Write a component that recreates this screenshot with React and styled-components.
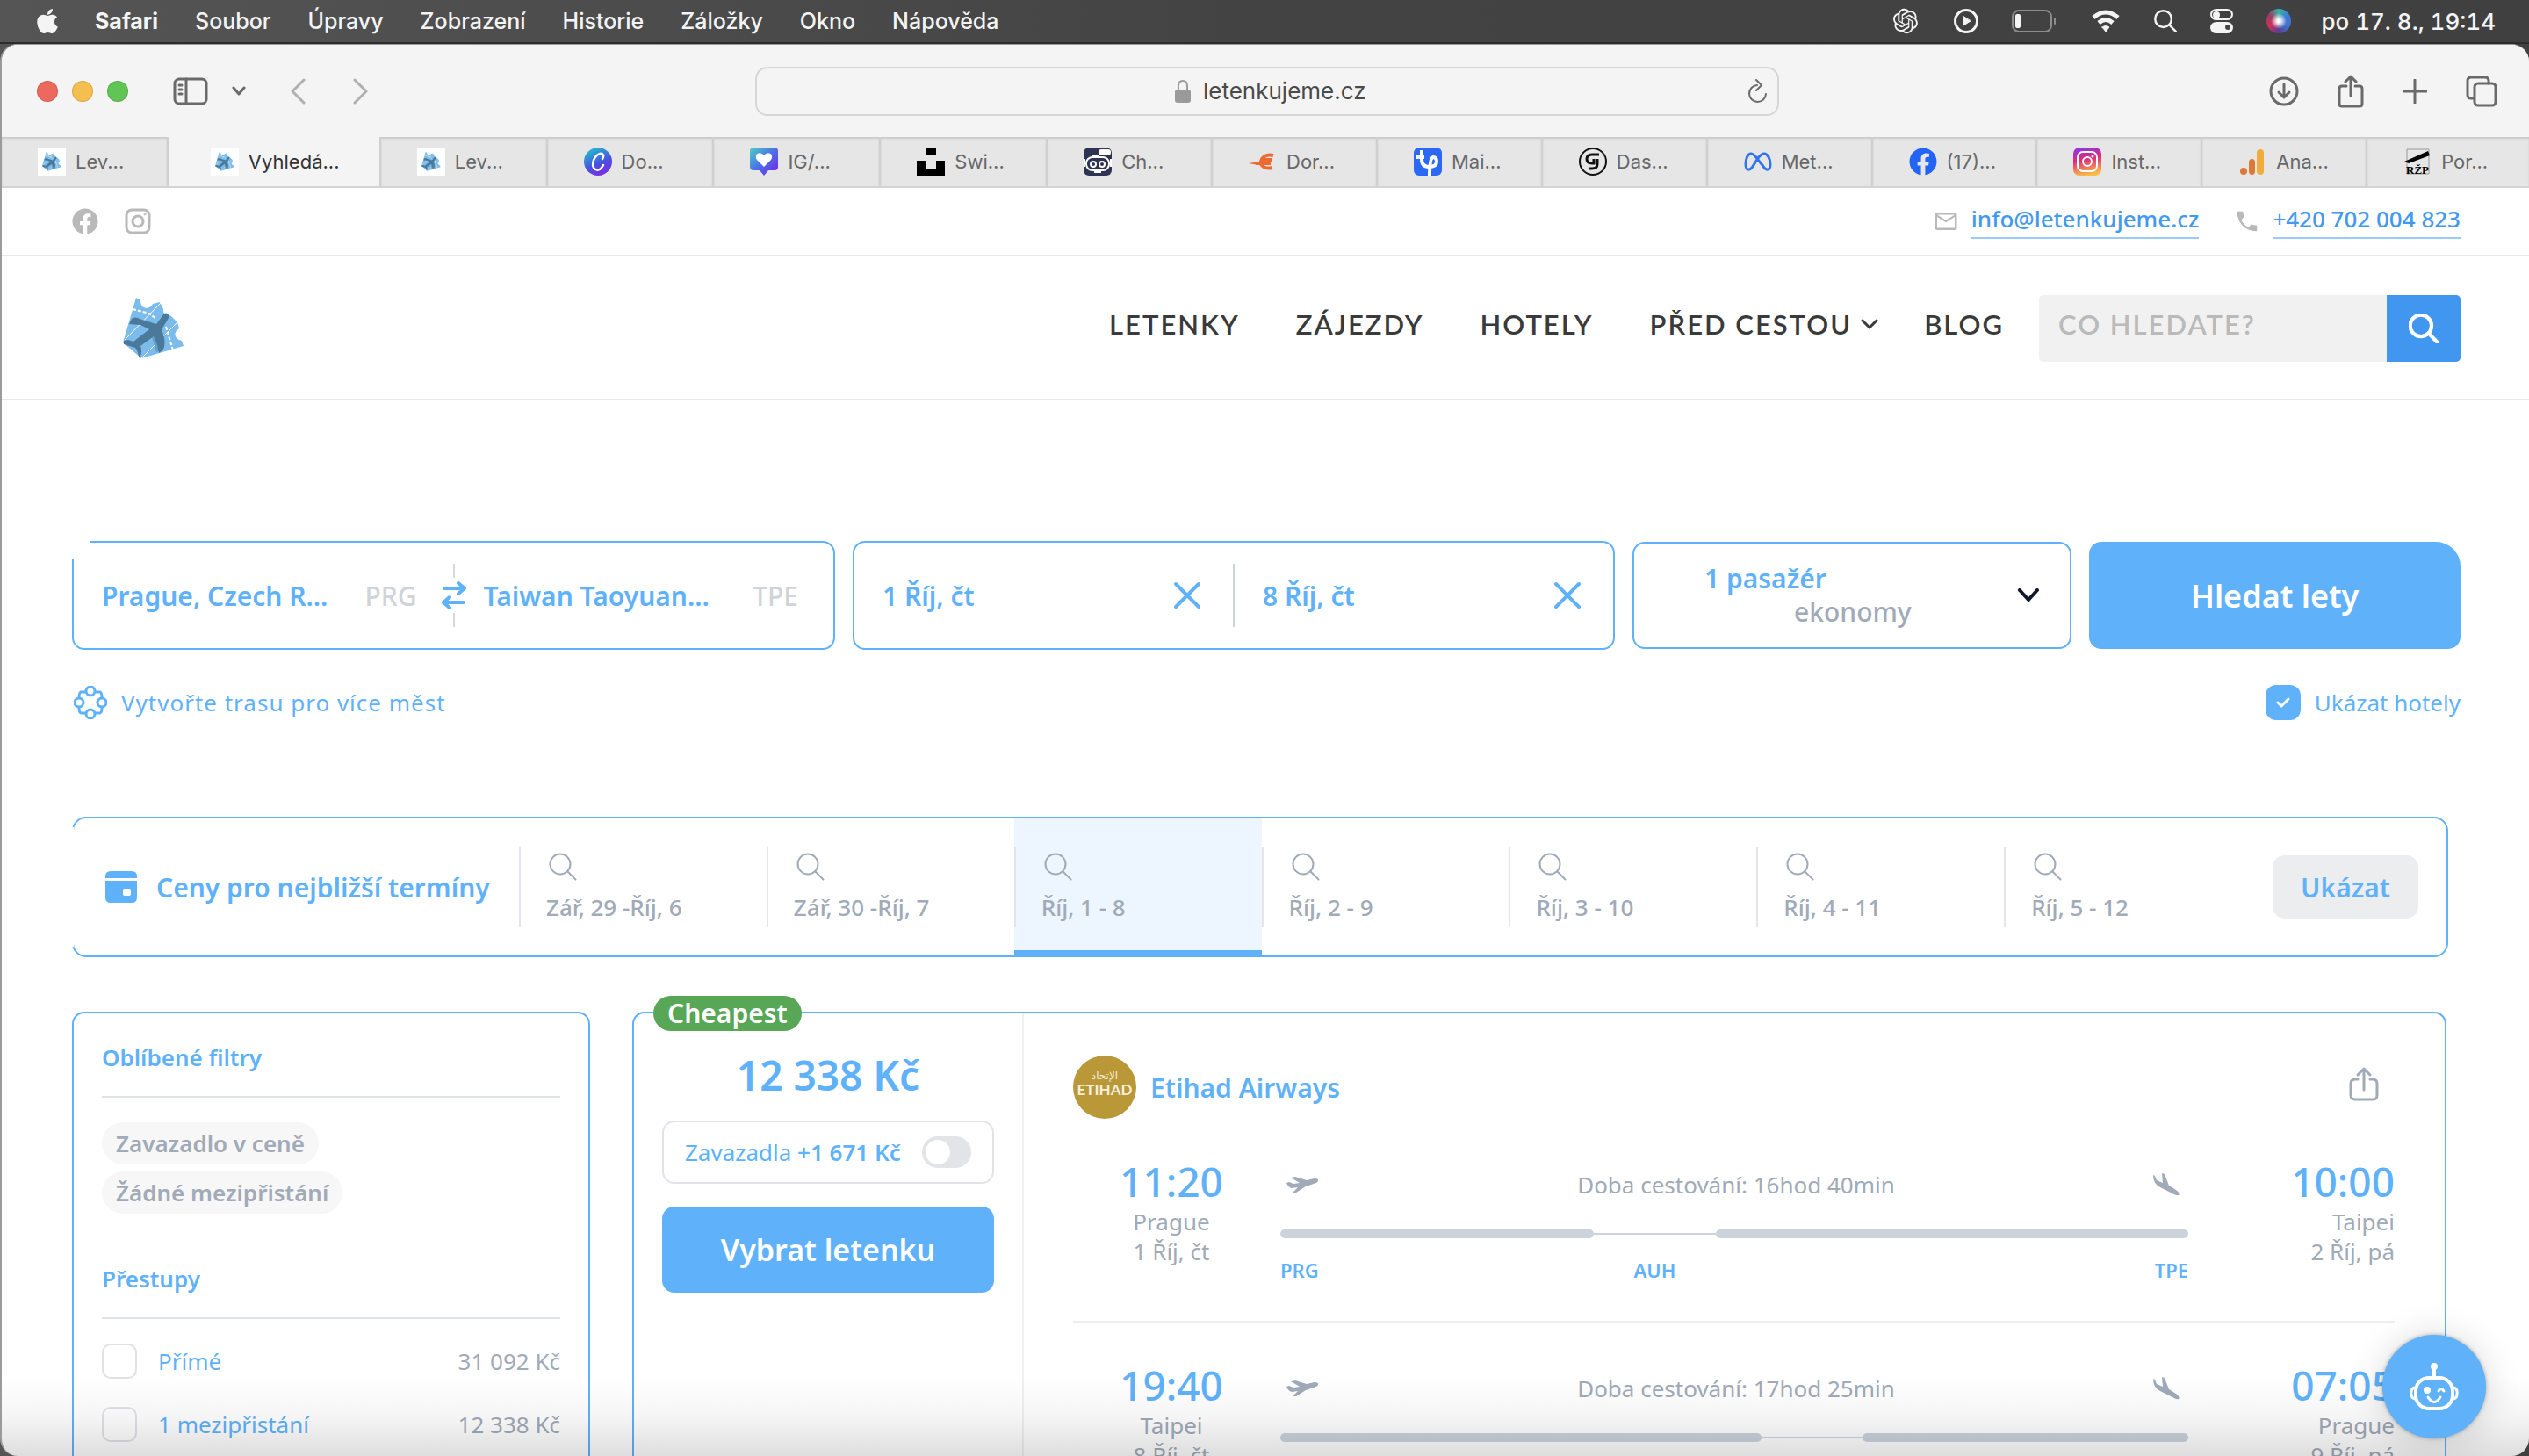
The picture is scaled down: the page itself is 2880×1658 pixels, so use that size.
import React from 'react';
import styled, {createGlobalStyle} from 'styled-components';
import {FaApple, FaFacebook} from 'react-icons/fa';
import {RiOpenaiFill} from 'react-icons/ri';
import {MdMailOutline, MdPhone} from 'react-icons/md';

const GlobalStyle = createGlobalStyle`
    * {
        box-sizing: border-box;
        margin: 0;
    }

    body {
        background: #333333;
        overflow: hidden;
        font-family: "Noto Sans", sans-serif;
    }

    button, input {
        font: inherit;
        color: inherit;
        border: 0;
        padding: 0;
        background: none;
        outline: none;
    }

    a {
        color: inherit;
        text-decoration: none;
    }

    svg {
        display: block;
        flex: none;
    }

    input[type="checkbox"] {
        appearance: none;
    }
`;

const menus = ['Soubor', 'Úpravy', 'Zobrazení', 'Historie', 'Záložky', 'Okno', 'Nápověda'];

const dates = [
    'Zář, 29 -Říj, 6',
    'Zář, 30 -Říj, 7',
    'Říj, 1 - 8',
    'Říj, 2 - 9',
    'Říj, 3 - 10',
    'Říj, 4 - 11',
    'Říj, 5 - 12',
];

const legs = [
    {
        from: {time: '11:20', city: 'Prague', date: '1 Říj, čt'},
        to: {time: '10:00', city: 'Taipei', date: '2 Říj, pá'},
        duration: '16hod 40min',
        parts: [357, 139, 538],
        codes: ['PRG', 'AUH', 'TPE'],
    },
    {
        from: {time: '19:40', city: 'Taipei', date: '8 Říj, čt'},
        to: {time: '07:05', city: 'Prague', date: '9 Říj, pá'},
        duration: '17hod 25min',
        parts: [548, 115, 371],
        codes: ['TPE', 'AUH', 'PRG'],
    },
];

const Line = ({w = 24, h = w, box = `0 0 ${w} ${h}`, sw = 2, children}) => (
    <svg width={w} height={h} viewBox={box} fill="none" stroke="currentColor" strokeWidth={sw}
         strokeLinecap="round" strokeLinejoin="round" aria-hidden="true">
        {children}
    </svg>
);

const TicketLogo = ({size}) => (
    <svg width={size} height={size} viewBox="0 0 70 70" aria-hidden="true">
        <path fill="#7bbcec" d="M15 0 20 3C20 14 31 14 34 7L42 5 46 13Q45 18 50 19T57 23L62 28 64 35C57 39 58 47 67 49L69 55 21 69 0 51Z"/>
        <path fill="none" stroke="#fff" d="M43 6 2 48M62 28 21 69"/>
        <path fill="none" stroke="#fff" strokeWidth="2" strokeDasharray="4 2" d="M11 13 30 18 38 24M49 33 57 60"/>
        <path fill="#619fc8" d="M33 45 38 43 43 60 38 62Z"/>
        <path fill="#4b7999" d="M47 18C51 16 54 20 51 25L44 36C48 46 49 55 45 60L41 63C40 57 39 51 35 44L20 55C22 60 21 65 19 69 17 64 17 60 14 57L1 53V49L6 48 12 50 30 36 20 31 7 30 10 24Q14 21 19 24L38 30Z"/>
    </svg>
);

const SearchIcon = ({size = 32, sw = 2}) => (
    <Line w={size} box="0 0 32 32" sw={sw}><circle cx="13" cy="13" r="11.500"/><path d="m21.500 21.500 9 9"/></Line>
);

const Cross = () => <Line w={32} sw={4}><path d="m3 3 26 26M29 3 3 29"/></Line>;

const TakeOff = () => (
    <svg width="38" height="20" viewBox="0 0 38 20" fill="#a0aab8" aria-hidden="true">
        <path d="M1 8 4 7 9 9 16 8 6 2 11 1 24 5 33 3Q38 3 37 6 36 8 32 9L23 12 12 19 8 19 14 13 7 14Q3 13 1 8Z"/>
    </svg>
);

const Landing = () => (
    <svg width="30" height="26" viewBox="0 0 30 26" fill="#a0aab8" aria-hidden="true">
        <path d="M0 2 2 3 4 8 11 11 10 0 13 1 18 14 26 19Q31 23 29 25 27 26 22 23L8 16Q0 12 0 2Z"/>
    </svg>
);

const Robot = () => (
    <Line w={56} h={56} sw={4}>
        <path d="M28 18V7"/>
        <circle cx="28" cy="5" r="3" fill="currentColor" strokeWidth="2"/>
        <rect x="7" y="18" width="42" height="35" rx="15"/>
        <path d="M6 29Q1 30 2 37 2 41 6 42M50 29Q55 30 54 37 54 41 50 42" strokeWidth="3"/>
        <circle cx="20" cy="32" r="2" fill="currentColor"/>
        <path d="M33 33Q36 28 39 33M21 40Q28 51 35 40" strokeWidth="3"/>
    </Line>
);

const favicons = {
    ticket: <svg width="32" height="32" viewBox="0 0 32 32"><path fill="#fff" d="M0 0h32v32H0z"/><g transform="translate(5 5)"><TicketLogo size={22}/></g></svg>,
    canva: (
        <svg width="32" height="32" viewBox="0 0 32 32">
            <defs><linearGradient id="cv" x1=".2" y1="0" x2=".7" y2="1"><stop stopColor="#20c4cb"/><stop offset=".6" stopColor="#4a50df"/><stop offset="1" stopColor="#7d2ae7"/></linearGradient></defs>
            <circle cx="16" cy="16" r="16" fill="url(#cv)"/>
            <path d="M21 13C24 8 20 5 16 8 10 12 8 22 13 25 17 27 20 24 22 20" fill="none" stroke="#fff" strokeWidth="2.500" strokeLinecap="round"/>
        </svg>
    ),
    heart: (
        <svg width="32" height="32" viewBox="0 0 32 32">
            <defs><linearGradient id="ht" x1="0" y1="0" x2="1" y2="1"><stop stopColor="#4bd1c4"/><stop offset=".5" stopColor="#4c6ee8"/><stop offset="1" stopColor="#7a1fe0"/></linearGradient></defs>
            <path fill="url(#ht)" d="M4 0h24q4 0 4 4v18q0 4-4 4h-7l-5 6-5-6H4q-4 0-4-4V4q0-4 4-4Z"/>
            <path fill="#fff" d="M16 22 8 14C4 8 11 3 16 9 21 3 28 8 24 14Z"/>
        </svg>
    ),
    blocks: <svg width="32" height="32" viewBox="0 0 32 32"><path d="M10 0h12v9H10zM0 15h10v9h12v-9h10v17H0z"/></svg>,
    bot: (
        <svg width="32" height="32" viewBox="0 0 32 32">
            <rect width="32" height="32" rx="6" fill="#2f3352"/>
            <rect x="17" y="2" width="14" height="7" rx="3" fill="#fff"/>
            <rect x="3" y="11" width="26" height="15" rx="7" fill="none" stroke="#fff" strokeWidth="2"/>
            <path d="M1 13v9M31 13v9M12 28h8M10 9h8" stroke="#fff" strokeWidth="2"/>
            <circle cx="11" cy="19" r="3" fill="none" stroke="#fff" strokeWidth="2"/>
            <circle cx="21" cy="19" r="3" fill="none" stroke="#fff" strokeWidth="2"/>
        </svg>
    ),
    euro: <svg width="32" height="32" viewBox="0 0 32 32"><path d="M28 9C20 7 15 11 14 16s5 9 13 7M8 18h17M15 14h11" fill="none" stroke="#ec6b35" strokeWidth="4"/><path d="M0 18 11 16v4Z" fill="#ec6b35"/></svg>,
    mail: (
        <svg width="32" height="32" viewBox="0 0 32 32">
            <rect width="32" height="32" rx="6" fill="#2b68f6"/>
            <path d="M3 11h9M9 3v10q0 9 8 9 9 0 9-6 0-5-4-5-4 1-4 21" fill="none" stroke="#fff" strokeWidth="4"/>
        </svg>
    ),
    dash: (
        <svg width="32" height="32" viewBox="0 0 32 32" fill="none" stroke="#111">
            <circle cx="16" cy="16" r="15" strokeWidth="2"/>
            <path d="M23 8h-8q-6 0-6 5t6 5h2v-5M21 13v6q0 5-6 5h-4" strokeWidth="3"/>
        </svg>
    ),
    meta: <svg width="32" height="32" viewBox="0 0 32 32"><path d="M16 14C12 8 10 7 8 7 4 7 2 13 2 19c0 8 5 8 9 1l5-8c3-4 5-5 7-5 4 0 7 6 7 12 0 8-5 8-9 1Z" fill="none" stroke="#2f74ea" strokeWidth="3"/></svg>,
    facebook: <FaFacebook size={32} color="#2464f5"/>,
    instagram: (
        <svg width="32" height="32" viewBox="0 0 32 32">
            <defs><linearGradient id="ig" x1=".2" y1="0" x2=".4" y2="1"><stop stopColor="#8b35e8"/><stop offset=".45" stopColor="#e02c78"/><stop offset="1" stopColor="#fcbc45"/></linearGradient></defs>
            <rect width="32" height="32" rx="7" fill="url(#ig)"/>
            <g fill="none" stroke="#fff" strokeWidth="2"><rect x="5" y="5" width="22" height="22" rx="6"/><circle cx="16" cy="16" r="5"/></g>
            <circle cx="22" cy="10" r="1.500" fill="#fff"/>
        </svg>
    ),
    analytics: <svg width="32" height="32" viewBox="0 0 32 32"><rect x="21" y="2" width="8" height="29" rx="4" fill="#f0ad3c"/><rect x="12" y="13" width="7" height="18" rx="4" fill="#dc7a35"/><circle cx="6" cy="27" r="4" fill="#dc7a35"/></svg>,
    rzp: (
        <svg width="32" height="32" viewBox="0 0 32 32">
            <path fill="none" stroke="#999" d="M4 2h25v28H4z"/>
            <path d="M1 16 28 4l2 5-24 9Z"/>
            <text x="16" y="30" fontSize="13" fontWeight="700" textAnchor="middle" fontFamily="Liberation Serif">RŽP</text>
        </svg>
    ),
};

const tabs = [
    ['ticket', 'Lev...'],
    ['ticket', 'Vyhledá...'],
    ['ticket', 'Lev...'],
    ['canva', 'Do...'],
    ['heart', 'IG/...'],
    ['blocks', 'Swi...'],
    ['bot', 'Ch...'],
    ['euro', 'Dor...'],
    ['mail', 'Mai...'],
    ['dash', 'Das...'],
    ['meta', 'Met...'],
    ['facebook', '(17)...'],
    ['instagram', 'Inst...'],
    ['analytics', 'Ana...'],
    ['rzp', 'Por...'],
];

const SystemBar = () => (
    <MenuBar>
        <MenuGroup $gap={42}>
            <FaApple size={32}/>
            <AppName>Safari</AppName>
            {menus.map((name) => <MenuItem key={name}>{name}</MenuItem>)}
        </MenuGroup>
        <MenuGroup $gap={38}>
            <RiOpenaiFill size={34}/>
            <Line w={28} box="0 0 28 28" sw={3}><circle cx="14" cy="14" r="12.500"/><path d="M11 9v10l8-5Z" fill="currentColor" strokeWidth="1"/></Line>
            <Line w={52} h={26}>
                <rect x="1" y="1" width="44" height="24" rx="7" stroke="#8d8d8d"/>
                <rect x="4" y="5" width="6" height="16" rx="2" fill="currentColor" stroke="none"/>
                <path d="M49 10v6" stroke="#8d8d8d"/>
            </Line>
            <Line w={34} h={26} sw={5}>
                <path d="M3 9Q17-3 31 9M9 15Q17 8 25 15" strokeLinecap="butt"/>
                <path d="m13 20 4 5 4-5q-4-3-8 0Z" fill="currentColor" strokeWidth="1"/>
            </Line>
            <SearchIcon size={26} sw={3}/>
            <Line w={26} h={28}>
                <rect x="1" y="1" width="24" height="11" rx="6"/><circle cx="7" cy="7" r="3" fill="currentColor"/>
                <rect x="1" y="16" width="24" height="11" rx="6" fill="currentColor"/><circle cx="20" cy="21" r="3" fill="#444" stroke="none"/>
            </Line>
            <Siri/>
            <Clock>po 17. 8., 19:14</Clock>
        </MenuGroup>
    </MenuBar>
);

const BrowserBar = () => (
    <>
        <Toolbar>
            <ToolSide>
                <Lights><Light $color="#ec695e"/><Light $color="#f4bf4e"/><Light $color="#60c554"/></Lights>
                <SidebarGroup>
                    <ToolButton aria-label="Postranní panel">
                        <Line w={40} h={32} sw={3}><rect x="2" y="2" width="36" height="28" rx="5"/><path d="M15 2v28M7 9h3M7 14h3M7 19h3"/></Line>
                    </ToolButton>
                    <ToolRule/>
                    <ToolButton aria-label="Skupiny panelů"><Line w={16} h={12} sw={3}><path d="m2 2 6 7 6-7"/></Line></ToolButton>
                </SidebarGroup>
                <History>
                    <ToolButton $faint aria-label="Zpět"><Line w={18} h={30} sw={3}><path d="M16 2 3 15l13 13"/></Line></ToolButton>
                    <ToolButton $faint aria-label="Vpřed"><Line w={18} h={30} sw={3}><path d="m2 2 13 13L2 28"/></Line></ToolButton>
                </History>
            </ToolSide>
            <Address>
                <AddressText>
                    <svg width="18" height="26" viewBox="0 0 18 26" fill="none" aria-hidden="true">
                        <rect y="11" width="18" height="15" rx="3" fill="#9a9a9a"/>
                        <path d="M4 12V7q0-6 5-6t5 6v5" stroke="#9a9a9a" strokeWidth="2"/>
                    </svg>
                    <AddressInput aria-label="Adresa" defaultValue="letenkujeme.cz"/>
                </AddressText>
                <ToolButton aria-label="Obnovit">
                    <Line w={26} h={28}><path d="M13 7a9.500 9.500 0 1 0 10 10M12 1l6 6-6 6"/></Line>
                </ToolButton>
            </Address>
            <ToolSide $end>
                <ToolButton aria-label="Stahování"><Line w={34} sw={3}><circle cx="17" cy="17" r="15"/><path d="M17 9v15m-6-6 6 6 6-6"/></Line></ToolButton>
                <ToolButton aria-label="Sdílet"><Line w={30} h={38} sw={3}><path d="M10 13H5q-3 0-3 3v17q0 3 3 3h20q3 0 3-3V16q0-3-3-3h-5M15 24V2M9 8l6-6 6 6"/></Line></ToolButton>
                <ToolButton aria-label="Nový panel"><Line w={28} sw={3}><path d="M14 1v26M1 14h26"/></Line></ToolButton>
                <ToolButton aria-label="Přehled panelů"><Line w={36} sw={3}><path d="M9 26H6q-4 0-4-4V6q0-4 4-4h16q4 0 4 4v3"/><rect x="10" y="9" width="24" height="25" rx="4"/></Line></ToolButton>
            </ToolSide>
        </Toolbar>
        <TabStrip>
            {tabs.map(([icon, title], i) => (
                <Tab key={i} $active={i === 1}>{favicons[icon]}{title}</Tab>
            ))}
        </TabStrip>
    </>
);

const SiteHeader = () => (
    <>
        <ContactBar>
            <Socials>
                <a href="#facebook" aria-label="Facebook"><FaFacebook size={30}/></a>
                <a href="#instagram" aria-label="Instagram">
                    <Line w={30} sw={3}><rect x="2" y="2" width="26" height="26" rx="6"/><circle cx="15" cy="15" r="6"/><circle cx="23" cy="7" r="1" strokeWidth="1"/></Line>
                </a>
            </Socials>
            <Contacts>
                <Contact><MdMailOutline size={30}/><ContactLink href="mailto:info@letenkujeme.cz">info@letenkujeme.cz</ContactLink></Contact>
                <Contact><MdPhone size={30}/><ContactLink href="tel:+420702004823">+420 702 004 823</ContactLink></Contact>
            </Contacts>
        </ContactBar>
        <Header>
            <a href="#home" aria-label="Letenkujeme"><TicketLogo size={70}/></a>
            <Nav>
                <NavLink href="#letenky">LETENKY</NavLink>
                <NavLink href="#zajezdy">ZÁJEZDY</NavLink>
                <NavLink href="#hotely">HOTELY</NavLink>
                <NavLink href="#pred-cestou">PŘED CESTOU<Line w={20} h={12} sw={3}><path d="m2 2 8 8 8-8"/></Line></NavLink>
                <NavLink href="#blog">BLOG</NavLink>
                <SiteSearch>
                    <SiteSearchInput aria-label="Co hledáte?" placeholder="CO HLEDATE?"/>
                    <SiteSearchButton aria-label="Hledat"><SearchIcon size={34} sw={4}/></SiteSearchButton>
                </SiteSearch>
            </Nav>
        </Header>
    </>
);

const SearchForm = () => (
    <>
        <FormRow>
            <FieldBox $cut>
                <Field>
                    <PlaceInput aria-label="Odkud" defaultValue="Prague, Czech R..."/>
                    <Code>PRG</Code>
                </Field>
                <Swap aria-label="Prohodit">
                    <Line w={28} h={32} sw={4}><path d="M3 8h23M19 2l7 6-7 6M25 24H2M9 18l-7 6 7 6"/></Line>
                </Swap>
                <Field>
                    <PlaceInput aria-label="Kam" defaultValue="Taiwan Taoyuan..."/>
                    <Code>TPE</Code>
                </Field>
            </FieldBox>
            <FieldBox>
                <Field $date><DateButton>1 Říj, čt</DateButton><button aria-label="Smazat odlet"><Cross/></button></Field>
                <FieldRule/>
                <Field $date><DateButton>8 Říj, čt</DateButton><button aria-label="Smazat návrat"><Cross/></button></Field>
            </FieldBox>
            <Passengers>
                <PassengerText>1 pasažér<CabinClass>ekonomy</CabinClass></PassengerText>
                <Line w={26} h={16} sw={4}><path d="m3 2 10 11L23 2"/></Line>
            </Passengers>
            <SubmitButton>Hledat lety</SubmitButton>
        </FormRow>
        <OptionsRow>
            <MultiCity href="#multi">
                <Line w={38} sw={3}>
                    <circle cx="19" cy="6" r="5"/><circle cx="19" cy="32" r="5"/><circle cx="6" cy="19" r="5"/><circle cx="32" cy="19" r="5"/>
                    <path d="M13 7H8q-2 1-2 6M25 7h5q2 1 2 6M13 31H8q-2-1-2-6M25 31h5q2-1 2-6"/>
                </Line>
                Vytvořte trasu pro více měst
            </MultiCity>
            <HotelsLabel>
                <HotelsBox>
                    <HotelsCheck type="checkbox" defaultChecked/>
                    <Line w={16} h={12} sw={3}><path d="m2 6 4 4 8-8"/></Line>
                </HotelsBox>
                Ukázat hotely
            </HotelsLabel>
        </OptionsRow>
    </>
);

const NearestDates = () => (
    <DateBar>
        <DateBarTitle>
            <svg width="36" height="36" viewBox="0 0 36 36" fill="currentColor">
                <path d="M6 0h24q6 0 6 6v2H0V6q0-6 6-6Z"/>
                <path fillRule="evenodd" d="M0 11h36v19q0 6-6 6H6q-6 0-6-6Zm22 9q-2 0-2 2v4q0 2 2 2h5q2 0 2-2v-4q0-2-2-2Z"/>
            </svg>
            Ceny pro nejbližší termíny
        </DateBarTitle>
        {dates.map((label, i) => (
            <DateCell key={label} $active={i === 2}>
                <DateCellBody><DateIcon><SearchIcon/></DateIcon>{label}</DateCellBody>
            </DateCell>
        ))}
        <DateBarEnd><ShowButton>Ukázat</ShowButton></DateBarEnd>
    </DateBar>
);

const Filters = () => (
    <FilterPanel>
        <FilterTitle>Oblíbené filtry</FilterTitle>
        <Chips>
            <Chip>Zavazadlo v ceně</Chip>
            <Chip>Žádné mezipřistání</Chip>
        </Chips>
        <FilterTitle>Přestupy</FilterTitle>
        <FilterList>
            <FilterOption><FilterCheck type="checkbox"/>Přímé<FilterPrice>31 092 Kč</FilterPrice></FilterOption>
            <FilterOption><FilterCheck type="checkbox"/>1 mezipřistání<FilterPrice>12 338 Kč</FilterPrice></FilterOption>
        </FilterList>
    </FilterPanel>
);

const Leg = ({leg}) => (
    <LegRow>
        <Stop><StopTime>{leg.from.time}</StopTime><span>{leg.from.city}</span><span>{leg.from.date}</span></Stop>
        <Route>
            <RouteHead><TakeOff/>Doba cestování: {leg.duration}<Landing/></RouteHead>
            <RouteLine>{leg.parts.map((size, i) => <RoutePart key={i} $size={size} $wait={i === 1}/>)}</RouteLine>
            <RouteCodes>{leg.codes.map((code, i) => <RouteCode key={i} $size={leg.parts[i]} $index={i}>{code}</RouteCode>)}</RouteCodes>
        </Route>
        <Stop $end><StopTime>{leg.to.time}</StopTime><span>{leg.to.city}</span><span>{leg.to.date}</span></Stop>
    </LegRow>
);

const Ticket = () => (
    <TicketCard>
        <Badge>Cheapest</Badge>
        <PriceColumn>
            <Price>12 338 Kč</Price>
            <Baggage><span>Zavazadla <b>+1 671 Kč</b></span><Switch type="checkbox" role="switch"/></Baggage>
            <SelectButton>Vybrat letenku</SelectButton>
        </PriceColumn>
        <TicketInfo>
            <Airline>
                <svg width="72" height="72" viewBox="0 0 72 72" aria-hidden="true">
                    <circle cx="36" cy="36" r="36" fill="#ba9737"/>
                    <g fill="#f5efdc" textAnchor="middle">
                        <text x="36" y="27" fontSize="12" fontFamily="DejaVu Sans">الإتحاد</text>
                        <text x="36" y="45" fontSize="17" fontWeight="700" fontFamily="Lato">ETIHAD</text>
                    </g>
                </svg>
                <AirlineName>Etihad Airways</AirlineName>
                <ShareButton aria-label="Sdílet letenku">
                    <Line w={34} h={40} sw={3}><path d="M10 15H7q-5 0-5 5v13q0 5 5 5h20q5 0 5-5V20q0-5-5-5h-3M17 27V3M10 10l7-7 7 7"/></Line>
                </ShareButton>
            </Airline>
            {legs.map((leg) => <Leg key={leg.duration} leg={leg}/>)}
        </TicketInfo>
    </TicketCard>
);

const App = () => (
    <Desktop>
        <GlobalStyle/>
        <SystemBar/>
        <Window>
            <BrowserBar/>
            <SiteHeader/>
            <Main>
                <SearchForm/>
                <NearestDates/>
                <Results>
                    <Filters/>
                    <Ticket/>
                </Results>
            </Main>
            <BottomShade/>
            <ChatButton aria-label="Chat"><Robot/></ChatButton>
        </Window>
    </Desktop>
);

export default App;

const blue = '#5fb2fa';
const grey = '#a0aab8';

const Desktop = styled.div`
    display: flex;
    flex-direction: column;
    height: 100vh;
    background: linear-gradient(90deg, #555555, #434343 50%, #404040);
`;

const MenuBar = styled.header`
    display: flex;
    justify-content: space-between;
    align-items: center;
    height: 50px;
    padding: 0 38px;
    flex: none;
    color: #f4f4f4;
    font-family: Inter, sans-serif;
    font-size: 25px;
    border-bottom: 2px solid #2c2c2c;
`;

const MenuGroup = styled.div`
    display: flex;
    align-items: center;
    gap: ${({$gap}) => $gap}px;
`;

const MenuItem = styled.button`
    font-weight: 500;
    white-space: nowrap;
`;

const AppName = styled(MenuItem)`
    margin-left: -4px;
    font-weight: 700;
`;

const Clock = styled(MenuItem)`
    margin-left: -4px;
    font-size: 26px;
    font-variant-numeric: tabular-nums;
`;

const Siri = styled.span`
    width: 28px;
    height: 28px;
    border-radius: 50%;
    background: radial-gradient(circle, #ffffff 8%, transparent 45%), conic-gradient(#35b5a3, #3d78d8, #3f73c9, #5b3c98, #d0305a, #9c3c68, #35b5a3);
`;

const Window = styled.div`
    position: relative;
    display: flex;
    flex-direction: column;
    flex: 1;
    min-height: 0;
    overflow: hidden;
    background: #ffffff;
    border: solid #9b9b9b;
    border-width: 1px 0 0 2px;
    border-radius: 20px;
`;

const Toolbar = styled.div`
    display: flex;
    align-items: center;
    height: 105px;
    padding: 0 36px 0 40px;
    flex: none;
    background: #f4f4f4;
    color: #6a6a6a;
`;

const ToolSide = styled.div`
    display: flex;
    align-items: center;
    flex: 1;
    justify-content: ${({$end}) => $end ? 'flex-end' : 'flex-start'};
    gap: ${({$end}) => $end ? 44 : 0}px;
`;

const Lights = styled.div`
    display: flex;
    gap: 16px;
`;

const Light = styled.span`
    width: 24px;
    height: 24px;
    border-radius: 50%;
    background: ${({$color}) => $color};
    border: 1px solid rgba(0, 0, 0, 0.12);
`;

const SidebarGroup = styled.div`
    display: flex;
    align-items: center;
    gap: 13px;
    margin-left: 51px;
`;

const ToolRule = styled.span`
    width: 1px;
    height: 36px;
    background: #dedede;
`;

const History = styled.div`
    display: flex;
    gap: 54px;
    margin-left: 50px;
`;

const ToolButton = styled.button`
    color: ${({$faint}) => $faint ? '#b0b0b0' : 'inherit'};
`;

const Address = styled.div`
    display: flex;
    align-items: center;
    width: 1166px;
    height: 56px;
    padding: 0 10px;
    border: 2px solid #d6d6d6;
    border-radius: 14px;
`;

const AddressText = styled.label`
    display: flex;
    flex: 1;
    align-items: center;
    justify-content: center;
    gap: 14px;
    padding-left: 36px;
`;

const AddressInput = styled.input`
    width: 188px;
    color: #4a4a4a;
    font-family: Inter, sans-serif;
    font-size: 26px;
`;

const TabStrip = styled.div`
    display: grid;
    grid-template-columns: 190fr 242fr repeat(4, 190fr) repeat(8, 188fr) 184fr;
    height: 58px;
    flex: none;
`;

const Tab = styled.button`
    display: flex;
    align-items: center;
    gap: 11px;
    min-width: 0;
    padding-left: ${({$active}) => $active ? 48 : 41}px;
    background: ${({$active}) => $active ? '#f4f4f4' : '#e6e6e6'};
    color: ${({$active}) => $active ? '#333333' : '#686868'};
    font-family: Inter, sans-serif;
    font-size: 22px;
    white-space: nowrap;
    border-right: 2px solid #d0d0d0;
    border-bottom: 2px solid #d4d4d4;
    box-shadow: ${({$active}) => $active ? 'none' : 'inset 0 2px 2px #c9c9c9'};

    &:last-child {
        border-right: 0;
    }
`;

const ContactBar = styled.div`
    display: flex;
    align-items: center;
    justify-content: space-between;
    height: 78px;
    flex: none;
    padding: 0 78px 0 80px;
    border-bottom: 2px solid #e8e8e8;
    color: #b9b9b9;
`;

const Socials = styled.div`
    display: flex;
    gap: 30px;
`;

const Contacts = styled.div`
    display: flex;
    gap: 40px;
`;

const Contact = styled.div`
    display: flex;
    align-items: center;
    gap: 14px;
`;

const ContactLink = styled.a`
    padding-bottom: 4px;
    border-bottom: 2px solid #9ccafa;
    color: #4299f0;
    font-size: 26px;
    font-weight: 500;
    line-height: 34px;
`;

const Header = styled.header`
    display: flex;
    align-items: center;
    justify-content: space-between;
    height: 164px;
    flex: none;
    padding: 2px 78px 0 138px;
    border-bottom: 2px solid #e8e8e8;
`;

const Nav = styled.nav`
    display: flex;
    align-items: center;
    gap: 64px;
    color: #3a3a3a;
    font-family: Lato, sans-serif;
    font-size: 31px;
    font-weight: 600;
    letter-spacing: 2px;
`;

const NavLink = styled.a`
    display: flex;
    align-items: center;
    gap: 10px;
    padding-bottom: 10px;

    &:nth-of-type(4) {
        margin-right: -12px;
    }
`;

const SiteSearch = styled.form`
    display: flex;
    width: 480px;
    height: 76px;
    margin-left: -24px;
    overflow: hidden;
    border-radius: 5px;
    background: #f1f1f1;
`;

const SiteSearchInput = styled.input`
    flex: 1;
    min-width: 0;
    padding: 0 0 10px 22px;
    letter-spacing: 2px;

    &::placeholder {
        color: #bababa;
    }
`;

const SiteSearchButton = styled.button`
    display: flex;
    align-items: center;
    justify-content: center;
    width: 84px;
    background: #4196f0;
    color: #ffffff;
`;

const Main = styled.main`
    flex: none;
    padding: 160px 78px 0 80px;
`;

const FormRow = styled.form`
    display: grid;
    grid-template-columns: 869fr 868fr 500fr 423fr;
    align-items: center;
    gap: 20px;
    color: ${blue};
    font-size: 30px;
    font-weight: 600;
`;

const FieldBox = styled.div`
    position: relative;
    display: flex;
    align-items: center;
    height: 124px;
    min-width: 0;
    border: 2px solid ${blue};
    border-radius: 14px;

    /* the rounded corner fades out on the first box */
    &::before {
        content: "";
        display: ${({$cut}) => $cut ? 'block' : 'none'};
        position: absolute;
        top: -2px;
        left: -2px;
        width: 20px;
        height: 20px;
        background: #ffffff;
    }
`;

const Field = styled.div`
    display: flex;
    flex: 1;
    align-items: center;
    justify-content: space-between;
    min-width: 0;
    padding: ${({$date}) => $date ? '0 36px 0 32px' : '0 28px 0 32px'};

    & + button + & {
        padding: 0 40px 0 20px;
    }
`;

const PlaceInput = styled.input`
    flex: 1;
    min-width: 0;
    width: 0;
`;

const Code = styled.span`
    color: #cfd3da;
    font-weight: 500;
`;

const Swap = styled.button`
    display: flex;
    flex-direction: column;
    align-items: center;
    gap: 4px;

    &::before, &::after {
        content: "";
        width: 2px;
        height: 16px;
        background: #d5d8de;
    }
`;

const FieldRule = styled.span`
    width: 2px;
    height: 72px;
    background: #cfd3da;
`;

const DateButton = styled.button`
    flex: 1;
    text-align: left;
`;

const Passengers = styled.button`
    display: flex;
    align-items: center;
    justify-content: space-between;
    height: 122px;
    padding: 0 34px 0 80px;
    border: 2px solid ${blue};
    border-radius: 14px;
    color: #111827;
`;

const PassengerText = styled.span`
    display: flex;
    flex-direction: column;
    color: ${blue};
    line-height: 38px;
    text-align: left;
`;

const CabinClass = styled.span`
    padding-left: 102px;
    color: ${grey};
    font-weight: 500;
`;

const SubmitButton = styled.button`
    height: 122px;
    border-radius: 14px 28px 14px 14px;
    background: ${blue};
    color: #ffffff;
    font-size: 36px;
`;

const OptionsRow = styled.div`
    display: flex;
    align-items: center;
    justify-content: space-between;
    height: 40px;
    padding-left: 2px;
    margin-top: 40px;
    color: ${blue};
    font-size: 26px;
`;

const MultiCity = styled.a`
    display: flex;
    align-items: center;
    gap: 16px;
    letter-spacing: 1px;
`;

const HotelsLabel = styled.label`
    display: flex;
    align-items: center;
    gap: 16px;
`;

const HotelsBox = styled.span`
    display: grid;
    place-items: center;
    color: #ffffff;

    & > * {
        grid-area: 1 / 1;
    }
`;

const HotelsCheck = styled.input`
    width: 40px;
    height: 40px;
    border-radius: 12px;
    background: ${blue};
`;

const DateBar = styled.section`
    position: relative;
    display: flex;
    height: 160px;
    margin: 110px 14px 0 0;
    border: 2px solid ${blue};
    border-radius: 16px;
    color: ${grey};
    font-size: 26px;
    font-weight: 500;

    &::before {
        content: "";
        position: absolute;
        top: 10px;
        bottom: 10px;
        left: -2px;
        width: 2px;
        background: #ffffff;
    }
`;

const DateBarTitle = styled.h2`
    display: flex;
    align-items: center;
    gap: 22px;
    width: 507px;
    padding-left: 36px;
    color: ${blue};
    font-size: 30px;
    font-weight: 600;
    white-space: nowrap;
`;

const DateCell = styled.button`
    display: flex;
    align-items: center;
    flex: 1;
    min-width: 0;
    background: ${({$active}) => $active ? '#edf6fe' : 'none'};
    box-shadow: ${({$active}) => $active ? `inset 0 -6px ${blue}` : 'none'};
`;

const DateCellBody = styled.span`
    display: flex;
    flex-direction: column;
    gap: 13px;
    height: 92px;
    padding: 7px 0 0 29px;
    border-left: 2px solid #e3e5ea;
    line-height: 34px;
    text-align: left;
    white-space: nowrap;
`;

const DateIcon = styled.span`
    padding-left: 3px;
`;

const DateBarEnd = styled.div`
    display: flex;
    align-items: center;
    width: 222px;
    padding: 0 32px 0 24px;
`;

const ShowButton = styled.button`
    flex: 1;
    height: 72px;
    border-radius: 14px;
    background: #ecedef;
    color: ${blue};
    font-size: 30px;
    font-weight: 600;
`;

const Results = styled.div`
    display: grid;
    grid-template-columns: 590px 1fr;
    gap: 48px;
    margin: 62px 16px 0 0;
    color: ${blue};
    font-size: 26px;
`;

const FilterPanel = styled.aside`
    min-height: 700px;
    padding: 32px;
    border: 2px solid ${blue};
    border-radius: 14px;
`;

const FilterTitle = styled.h3`
    padding-bottom: 26px;
    margin-bottom: 28px;
    border-bottom: 2px solid #e0e4e9;
    font-size: 26px;
    font-weight: 600;
    line-height: 36px;
`;

const Chips = styled.div`
    display: flex;
    flex-direction: column;
    align-items: flex-start;
    gap: 8px;
    margin-bottom: 56px;
`;

const Chip = styled.button`
    height: 48px;
    padding: 0 16px;
    border-radius: 24px;
    background: #f7f7f7;
    color: ${grey};
    font-weight: 600;
`;

const FilterList = styled.div`
    display: flex;
    flex-direction: column;
    gap: 32px;
`;

const FilterOption = styled.label`
    display: flex;
    align-items: center;
    height: 40px;
    gap: 24px;
`;

const FilterCheck = styled.input`
    width: 40px;
    height: 40px;
    border: 2px solid #e0e0e6;
    border-radius: 10px;
`;

const FilterPrice = styled.span`
    margin-left: auto;
    color: ${grey};
`;

const TicketCard = styled.article`
    position: relative;
    display: flex;
    border: 2px solid ${blue};
    border-radius: 14px;
`;

const Badge = styled.span`
    position: absolute;
    top: -20px;
    left: 22px;
    padding: 0 16px;
    border-radius: 20px;
    background: #57a757;
    color: #ffffff;
    font-size: 30px;
    font-weight: 600;
    line-height: 40px;
`;

const PriceColumn = styled.div`
    display: flex;
    flex-direction: column;
    width: 444px;
    flex: none;
    padding: 40px 32px 0;
    border-right: 2px solid #eef0f2;
`;

const Price = styled.div`
    margin-bottom: 22px;
    font-size: 46px;
    font-weight: 600;
    line-height: 60px;
    text-align: center;
`;

const Baggage = styled.label`
    display: flex;
    align-items: center;
    justify-content: space-between;
    height: 72px;
    padding: 0 24px;
    margin-bottom: 26px;
    border: 2px solid #e3e4e8;
    border-radius: 14px;
    white-space: nowrap;

    b {
        font-weight: 600;
    }
`;

const Switch = styled.input`
    width: 56px;
    height: 36px;
    padding: 4px;
    border-radius: 18px;
    background: #e2e4e8;

    &::before {
        content: "";
        display: block;
        width: 28px;
        height: 28px;
        border-radius: 50%;
        background: #ffffff;
    }
`;

const SelectButton = styled.button`
    height: 98px;
    border-radius: 14px;
    background: ${blue};
    color: #ffffff;
    font-size: 34px;
    font-weight: 600;
`;

const TicketInfo = styled.div`
    flex: 1;
    min-width: 0;
    padding: 48px 57px 0 56px;
`;

const Airline = styled.div`
    display: flex;
    align-items: center;
    gap: 16px;
`;

const AirlineName = styled.h3`
    flex: 1;
    font-size: 30px;
    font-weight: 600;
`;

const ShareButton = styled.button`
    margin: 0 18px 8px 0;
    color: ${grey};
`;

const LegRow = styled.div`
    display: flex;
    padding: 42px 0 43px;

    & + & {
        border-top: 2px solid #eeeeee;
    }
`;

const Stop = styled.div`
    display: flex;
    flex-direction: column;
    align-items: ${({$end}) => $end ? 'flex-end' : 'center'};
    width: ${({$end}) => $end ? 235 : 224}px;
    margin-right: ${({$end}) => $end ? 0 : 12}px;
    color: ${grey};
    line-height: 34px;
`;

const StopTime = styled.span`
    color: ${blue};
    font-size: 46px;
    font-weight: 500;
    line-height: 58px;
`;

const Route = styled.div`
    flex: 1;
    padding-top: 16px;
`;

const RouteHead = styled.div`
    display: flex;
    align-items: center;
    justify-content: space-between;
    padding: 0 10px 0 6px;
    color: ${grey};
    line-height: 34px;
`;

const RouteLine = styled.div`
    display: flex;
    align-items: center;
    height: 10px;
    margin-top: 34px;
`;

const RoutePart = styled.span`
    flex: ${({$size}) => $size} 0 0;
    height: ${({$wait}) => $wait ? 2 : 10}px;
    border-radius: ${({$wait}) => $wait ? 0 : 5}px;
    background: #ccd3dd;
`;

const RouteCodes = styled.div`
    display: flex;
    margin-top: 21px;
    font-size: 22px;
    font-weight: 600;
    line-height: 30px;
`;

const RouteCode = styled.span`
    flex: ${({$size}) => $size} 0 0;
    text-align: ${({$index}) => ['left', 'center', 'right'][$index]};
`;

const BottomShade = styled.div`
    position: absolute;
    right: 0;
    bottom: 0;
    left: 0;
    height: 90px;
    background: linear-gradient(rgba(0, 0, 0, 0), rgba(0, 0, 0, 0.04) 50%, rgba(0, 0, 0, 0.13));
    pointer-events: none;
`;

const ChatButton = styled.button`
    position: absolute;
    right: 49px;
    bottom: 20px;
    display: flex;
    align-items: center;
    justify-content: center;
    width: 118px;
    height: 118px;
    border-radius: 50%;
    background: ${blue};
    color: #ffffff;
    box-shadow: 0 2px 40px rgba(0, 0, 0, 0.16), 0 0 4px rgba(0, 0, 0, 0.3);
`;
